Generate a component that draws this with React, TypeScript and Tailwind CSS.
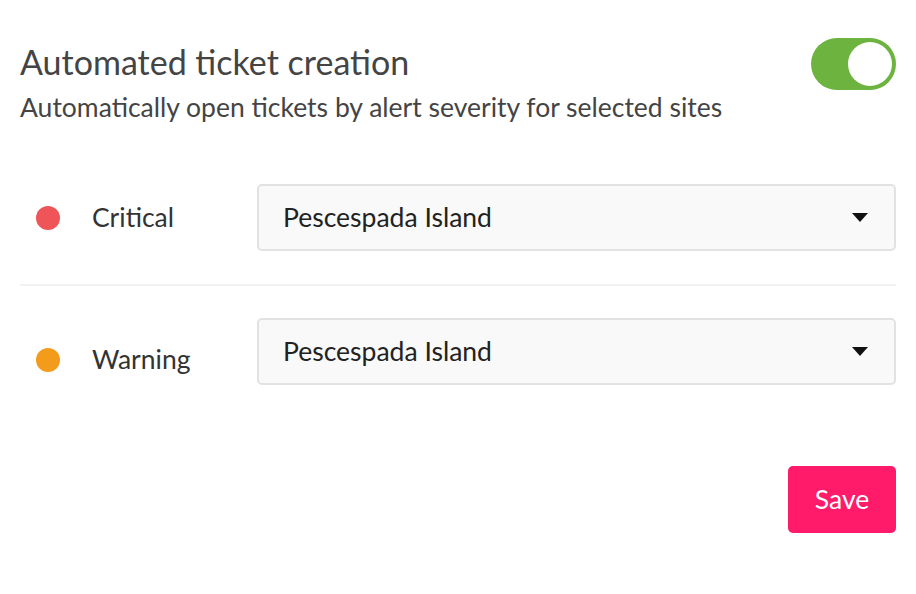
import React, { useState } from 'react';

const rows = [
  { label: 'Critical', color: 'bg-[#ef5458]', value: 'Pescespada Island', offset: '' },
  { label: 'Warning', color: 'bg-[#f39c1b]', value: 'Pescespada Island', offset: 'pt-[17px]' },
];

const Caret = () => (
  <svg width="16" height="9" viewBox="0 0 16 9" className="shrink-0">
    <path d="M0 0 L16 0 L8 9 Z" fill="#111" />
  </svg>
);

export default function App() {
  const [enabled, setEnabled] = useState(true);

  return (
    <div className="min-h-[594px] bg-white px-5 pt-[40px] font-['Lato',sans-serif]">
      {/* Header */}
      <div className="flex items-start justify-between">
        <div>
          <h1 className="text-[34px] leading-[44px] text-[#444]">Automated ticket creation</h1>
          <p className="mt-[7px] text-[26.5px] leading-[32px] text-[#444]">
            Automatically open tickets by alert severity for selected sites
          </p>
        </div>
        <button
          onClick={() => setEnabled(!enabled)}
          className={`mt-[-2px] flex h-[52px] w-[85px] items-center rounded-full p-[4px] ${
            enabled ? 'justify-end bg-[#6db33f]' : 'justify-start bg-[#ccc]'
          }`}
        >
          <span className="h-[44px] w-[44px] rounded-full bg-white" />
        </button>
      </div>

      {/* Severity rows */}
      <div className="mt-[61px]">
        {rows.map((row, i) => (
          <div key={row.label}>
            {i > 0 && <div className="mt-[33px] mb-[32px] h-[2px] bg-[#f1f1f1]" />}
            <div className="flex items-center">
              <div className={`flex w-[237px] items-center ${row.offset}`}>
                <span className={`ml-4 h-6 w-6 rounded-full ${row.color}`} />
                <span className="ml-8 text-[26.5px] text-[#333]">{row.label}</span>
              </div>
              <div className="flex h-[67px] flex-1 items-center justify-between rounded-[5px] border-2 border-[#e2e2e2] bg-[#f9f9f9] pl-6 pr-[26px]">
                <span className="text-[26.5px] text-[#222]">{row.value}</span>
                <Caret />
              </div>
            </div>
          </div>
        ))}
      </div>

      {/* Footer */}
      <div className="mt-[81px] flex justify-end">
        <button className="h-[67px] w-[108px] rounded-[5px] bg-[#ff1a6a] text-[26.5px] text-white">Save</button>
      </div>
    </div>
  );
}
